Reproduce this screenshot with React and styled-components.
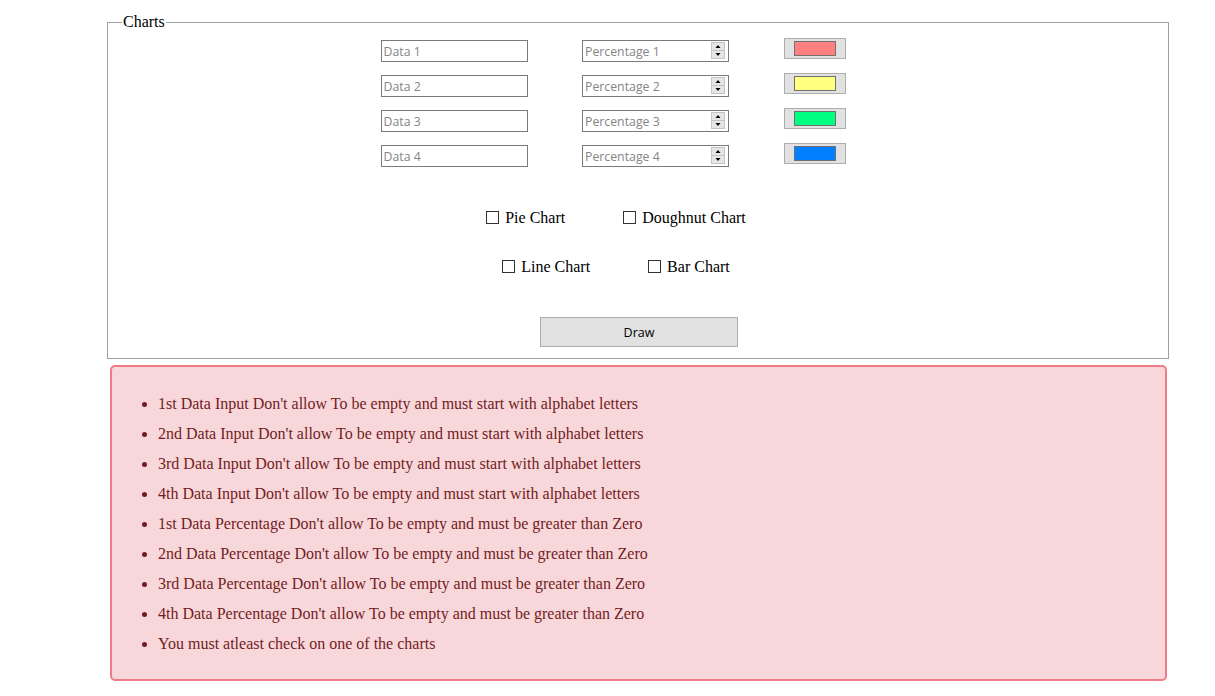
import React from 'react';
import styled, { createGlobalStyle } from 'styled-components';

const GlobalStyle = createGlobalStyle`
    html, body {
        margin : 0;
        padding : 0;
        background : #ffffff;
        font-family : "Liberation Serif", "Times New Roman", serif;
        font-size : 16px;
        color : #000000;
    }
`;

const Page = styled.div`
    padding : 13px 46px 0 107px;
`;

const Fieldset = styled.fieldset`
    margin : 0;
    padding : 9px 0 11px 0;
    min-width : 0;
    border : 1px solid #a0a0a0;
    box-sizing : border-box;
    width : 1062px;
`;

const Legend = styled.legend`
    margin-left : 14px;
    padding : 0 1px;
    line-height : 18px;
    font-size : 16px;
`;

const InputGroup = styled.div`
    display : flex;
    flex-direction : column;
    gap : 13px;
`;

const InputRow = styled.div`
    display : flex;
    justify-content : center;
    align-items : flex-start;
    gap : 54.5px;
    padding-right : 50px;
`;

const TextInput = styled.input`
    box-sizing : border-box;
    width : 147px;
    height : 22px;
    margin : 0;
    padding : 0 2px;
    border : 1px solid #7a7a7a;
    border-radius : 0;
    background : #ffffff;
    font-family : "Open Sans", "Noto Sans", sans-serif;
    font-size : 12.3px;
    outline : none;
    &::placeholder {
        color : #858585;
    }
    &::-webkit-inner-spin-button,
    &::-webkit-outer-spin-button {
        -webkit-appearance : none;
        margin : 0;
    }
    -moz-appearance : textfield;
`;

const NumberWrap = styled.div`
    position : relative;
    width : 147px;
    height : 22px;
`;

const Spinner = styled.svg`
    position : absolute;
    top : 2px;
    right : 4px;
    width : 14px;
    height : 17px;
`;

const ColorButton = styled.button`
    box-sizing : border-box;
    width : 62px;
    height : 21px;
    margin : -2px 0 0 0;
    padding : 0;
    display : flex;
    align-items : center;
    justify-content : center;
    background : #e1e1e1;
    border : 1px solid #adadad;
    border-radius : 0;
`;

const Swatch = styled.span`
    display : block;
    box-sizing : border-box;
    width : 42px;
    height : 15px;
    border : 1px solid #707070;
    background : ${props => props.color};
`;

const CheckRow = styled.div`
    display : flex;
    justify-content : center;
    gap : 58px;
    padding-right : 44px;
    margin-top : ${props => props.top}px;
`;

const CheckLabel = styled.label`
    display : flex;
    align-items : center;
    gap : 6px;
    line-height : 18px;
    font-size : 16px;
`;

const CheckBox = styled.input`
    appearance : none;
    -webkit-appearance : none;
    box-sizing : border-box;
    width : 13px;
    height : 13px;
    margin : 0 0 2px 0;
    border : 1px solid #333333;
    background : #ffffff;
    border-radius : 0;
`;

const DrawRow = styled.div`
    display : flex;
    justify-content : center;
    padding-left : 2px;
    margin-top : 41px;
`;

const DrawButton = styled.button`
    box-sizing : border-box;
    width : 198px;
    height : 30px;
    margin : 0;
    background : #e1e1e1;
    border : 1px solid #adadad;
    border-radius : 0;
    font-family : "Open Sans", "Noto Sans", sans-serif;
    font-size : 12.5px;
    color : #000000;
`;

const Alert = styled.div`
    box-sizing : border-box;
    width : 1057px;
    height : 316px;
    margin : 6px 0 0 3px;
    padding : 22px 0 19px 0;
    background : #f8d7da;
    border : 2px solid #ef7b85;
    border-radius : 5px;
    color : #721c24;
`;

const ErrorList = styled.ul`
    margin : 0;
    padding : 0 0 0 46px;
    line-height : 30px;
    font-size : 16px;
`;

const rows = [1, 2, 3, 4];
const colors = ['#ff8080', '#ffff80', '#00ff80', '#0080ff'];

const errors = [
    "1st Data Input Don't allow To be empty and must start with alphabet letters",
    "2nd Data Input Don't allow To be empty and must start with alphabet letters",
    "3rd Data Input Don't allow To be empty and must start with alphabet letters",
    "4th Data Input Don't allow To be empty and must start with alphabet letters",
    "1st Data Percentage Don't allow To be empty and must be greater than Zero",
    "2nd Data Percentage Don't allow To be empty and must be greater than Zero",
    "3rd Data Percentage Don't allow To be empty and must be greater than Zero",
    "4th Data Percentage Don't allow To be empty and must be greater than Zero",
    "You must atleast check on one of the charts",
];

const SpinIcon = () => (
    <Spinner viewBox="0 0 14 17">
        <rect x="0.5" y="0.5" width="13" height="16" fill="#e6e6e6" stroke="#c4c4c4" />
        <line x1="1" y1="8.5" x2="13" y2="8.5" stroke="#c4c4c4" />
        <polygon points="4.5,6 9.5,6 7,3" fill="#000" />
        <polygon points="4.5,11 9.5,11 7,14" fill="#000" />
    </Spinner>
);

export default function App() {
    return (
        <Page>
            <GlobalStyle />
            <Fieldset>
                <Legend>Charts</Legend>
                <InputGroup>
                    {rows.map((n, i) => (
                        <InputRow key={n}>
                            <TextInput type="text" placeholder={`Data ${n}`} />
                            <NumberWrap>
                                <TextInput type="number" placeholder={`Percentage ${n}`} />
                                <SpinIcon />
                            </NumberWrap>
                            <ColorButton type="button">
                                <Swatch color={colors[i]} />
                            </ColorButton>
                        </InputRow>
                    ))}
                </InputGroup>

                <CheckRow top={42}>
                    <CheckLabel><CheckBox type="checkbox" />Pie Chart</CheckLabel>
                    <CheckLabel><CheckBox type="checkbox" />Doughnut Chart</CheckLabel>
                </CheckRow>
                <CheckRow top={31}>
                    <CheckLabel><CheckBox type="checkbox" />Line Chart</CheckLabel>
                    <CheckLabel><CheckBox type="checkbox" />Bar Chart</CheckLabel>
                </CheckRow>

                <DrawRow>
                    <DrawButton type="button">Draw</DrawButton>
                </DrawRow>
            </Fieldset>

            <Alert>
                <ErrorList>
                    {errors.map(e => (
                        <li key={e}>{e}</li>
                    ))}
                </ErrorList>
            </Alert>
        </Page>
    );
}
